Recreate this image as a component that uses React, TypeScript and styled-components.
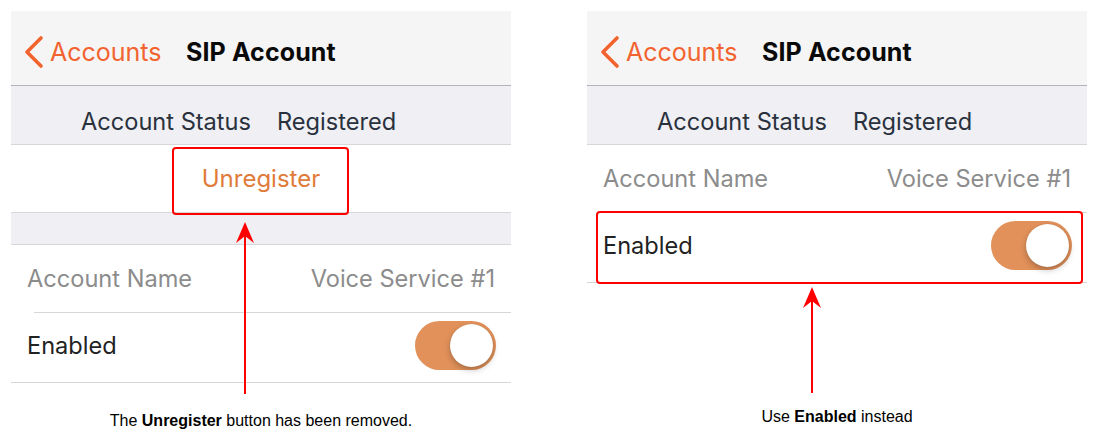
import React from "react";
import styled, { createGlobalStyle } from "styled-components";

const GlobalStyle = createGlobalStyle`
  html, body { margin: 0; padding: 0; background: #ffffff; }
  body { font-family: Inter, "Noto Sans", sans-serif; }
  * { box-sizing: border-box; }
`;

const Page = styled.div`
  display: flex;
  gap: 76px;
  padding: 11px 0 0 11px;
  width: 1099px;
  height: 441px;
  overflow: hidden;
`;

const Panel = styled.div`
  position: relative;
  width: 500px;
  height: 430px;
  display: flex;
  flex-direction: column;
`;

const Screen = styled.div`
  display: flex;
  flex-direction: column;
  width: 500px;
`;

const NavBar = styled.div`
  height: 75px;
  background: #f5f5f5;
  border-bottom: 1px solid #b4b4b8;
  display: flex;
  align-items: center;
  padding: 7px 0 0 12px;
`;

const BackButton = styled.div`
  display: flex;
  align-items: center;
  gap: 5px;
  color: #f3632f;
  font-size: 25px;
  width: 163px;
`;

const Title = styled.div`
  font-size: 25px;
  font-weight: 700;
  color: #0a0a0a;
  letter-spacing: 0.1px;
`;

const StatusSection = styled.div`
  height: 59px;
  background: #efeff4;
  border-bottom: 1px solid #d6d6db;
  display: flex;
  align-items: center;
  gap: 26px;
  padding: 12px 0 0 70px;
  font-size: 23.6px;
  color: #29313d;
`;

const ActionRow = styled.div`
  height: 68px;
  background: #ffffff;
  border-bottom: 1px solid #d6d6db;
  display: flex;
  align-items: center;
  justify-content: center;
  font-size: 24px;
  color: #e07b39;
`;

const SectionGap = styled.div`
  height: 32px;
  background: #efeff4;
  border-bottom: 1px solid #d6d6db;
`;

const Row = styled.div<{ $inset?: boolean; $h: number; $shift: number }>`
  position: relative;
  height: ${(p) => p.$h}px;
  display: flex;
  align-items: center;
  justify-content: space-between;
  padding: 0 16px ${(p) => p.$shift}px 16px;
  font-size: 23.6px;
  background: #ffffff;
  &::after {
    content: "";
    position: absolute;
    bottom: 0;
    right: 0;
    left: ${(p) => (p.$inset ? "23px" : "0")};
    height: 1px;
    background: #d6d6db;
  }
`;

const Label = styled.span<{ $muted?: boolean }>`
  color: ${(p) => (p.$muted ? "#8c8c8c" : "#222222")};
`;

const Track = styled.div`
  width: 81px;
  height: 49px;
  border-radius: 25px;
  background: #e2915a;
  display: flex;
  align-items: center;
  justify-content: flex-end;
  padding-right: 3px;
  margin-right: -1px;
`;

const Knob = styled.div`
  width: 43px;
  height: 43px;
  border-radius: 50%;
  background: #ffffff;
  box-shadow: 0 3px 6px rgba(0, 0, 0, 0.25), 0 0 1px rgba(0, 0, 0, 0.2);
`;

const Highlight = styled.div<{ $x: number; $y: number; $w: number; $h: number }>`
  position: absolute;
  left: ${(p) => p.$x}px;
  top: ${(p) => p.$y}px;
  width: ${(p) => p.$w}px;
  height: ${(p) => p.$h}px;
  border: 2px solid #ff0000;
  border-radius: 4px;
`;

const ArrowWrap = styled.svg<{ $x: number; $y: number }>`
  position: absolute;
  left: ${(p) => p.$x}px;
  top: ${(p) => p.$y}px;
  overflow: visible;
`;

const Caption = styled.div<{ $bottom: number }>`
  margin-top: auto;
  margin-bottom: ${(p) => p.$bottom}px;
  font-family: "Liberation Sans", Arial, sans-serif;
  font-size: 16px;
  line-height: 18px;
  color: #000000;
  text-align: center;
  b { font-weight: 700; }
`;

const Chevron = () => (
  <svg width="22" height="34" viewBox="0 0 22 34">
    <path
      d="M18 3 L4 17 L18 31"
      fill="none"
      stroke="#f3632f"
      strokeWidth="3.6"
      strokeLinecap="round"
      strokeLinejoin="round"
    />
  </svg>
);

const Arrow = ({ x, y, len }: { x: number; y: number; len: number }) => (
  <ArrowWrap $x={x - 10} $y={y} width="20" height={len} viewBox={`0 0 20 ${len}`}>
    <line x1="10" y1="12" x2="10" y2={len} stroke="#ff0000" strokeWidth="2" />
    <path d="M10 0 L19 21 L10 14 L1 21 Z" fill="#ff0000" />
  </ArrowWrap>
);

const Toggle = () => (
  <Track>
    <Knob />
  </Track>
);

const NavHeader = () => (
  <NavBar>
    <BackButton>
      <Chevron />
      <span>Accounts</span>
    </BackButton>
    <Title>SIP Account</Title>
  </NavBar>
);

const Status = () => (
  <StatusSection>
    <span>Account Status</span>
    <span>Registered</span>
  </StatusSection>
);

export default function App() {
  return (
    <>
      <GlobalStyle />
      <Page>
        <Panel>
          <Screen>
            <NavHeader />
            <Status />
            <ActionRow>Unregister</ActionRow>
            <SectionGap />
            <Row $inset $h={68} $shift={1}>
              <Label $muted>Account Name</Label>
              <Label $muted>Voice Service #1</Label>
            </Row>
            <Row $h={70} $shift={5}>
              <Label>Enabled</Label>
              <Toggle />
            </Row>
          </Screen>
          <Highlight $x={161} $y={136} $w={177} $h={68} />
          <Arrow x={234} y={211} len={172} />
          <Caption $bottom={11}>
            The <b>Unregister</b> button has been removed.
          </Caption>
        </Panel>
        <Panel>
          <Screen>
            <NavHeader />
            <Status />
            <Row $inset $h={68} $shift={1}>
              <Label $muted>Account Name</Label>
              <Label $muted>Voice Service #1</Label>
            </Row>
            <Row $h={70} $shift={5}>
              <Label>Enabled</Label>
              <Toggle />
            </Row>
          </Screen>
          <Highlight $x={9} $y={200} $w={487} $h={73} />
          <Arrow x={225} y={276} len={106} />
          <Caption $bottom={15}>
            Use <b>Enabled</b> instead
          </Caption>
        </Panel>
      </Page>
    </>
  );
}
